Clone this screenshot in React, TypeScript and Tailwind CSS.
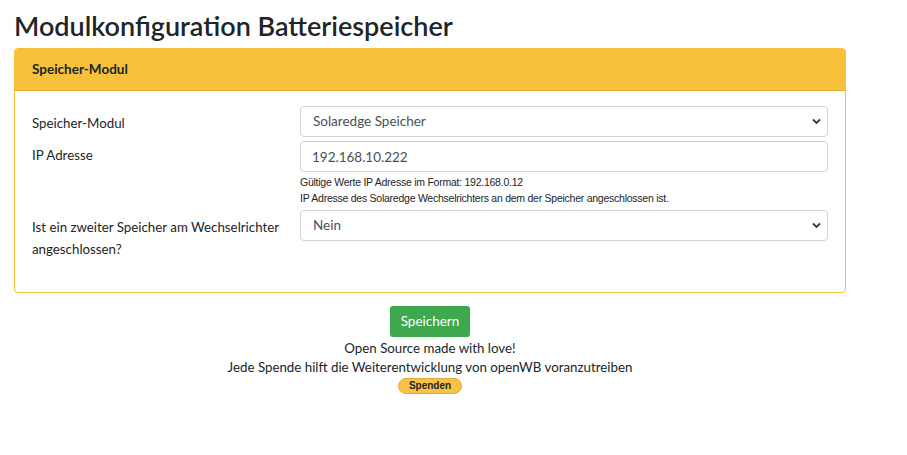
import React, { useState } from "react";

export default function App() {
  const [modul, setModul] = useState("solaredge");
  const [ip, setIp] = useState("192.168.10.222");
  const [zweiter, setZweiter] = useState("0");

  const ctrl =
    "w-full h-[31px] border border-[#ced4da] rounded-[4px] bg-white px-3 text-[13.5px] text-[#495057] outline-none";

  return (
    <div className="min-h-[455px] bg-white text-[#212529] font-['Lato',sans-serif] text-[13.3px]">
      <div className="w-[832px] ml-[14px]">
        <h1 className="pt-[9px] pb-[5px] text-[27px] leading-[34px] font-semibold">
          Modulkonfiguration Batteriespeicher
        </h1>

        {/* card */}
        <div className="border border-[#f5c13b] rounded-[4px]">
          <div className="h-[42px] bg-[#f7c13b] border-b border-[#e0ac2a] px-[17px] flex items-center font-bold text-[13.5px]">
            Speicher-Modul
          </div>
          <div className="px-[17px] pt-[15px] pb-[32px] flex flex-col gap-[4px]">
            <div className="flex">
              <label className="w-[268px] pt-[8px]">Speicher-Modul</label>
              <div className="flex-1">
                <div className="relative">
                  <select value={modul} onChange={(e) => setModul(e.target.value)} className={ctrl + " appearance-none"}>
                    <option value="none">Nicht vorhanden</option>
                    <option value="solaredge">Solaredge Speicher</option>
                  </select>
                  <Chevron />
                </div>
              </div>
            </div>

            <div className="flex">
              <label className="w-[268px] pt-[5px]">IP Adresse</label>
              <div className="flex-1">
                <input value={ip} onChange={(e) => setIp(e.target.value)} className={ctrl + " px-[11px]"} />
                <div className="mt-[2px] text-[10.5px] leading-[16px] tracking-[-0.25px] font-['Liberation_Sans_Narrow','Liberation_Sans',sans-serif]">
                  <div>Gültige Werte IP Adresse im Format: 192.168.0.12</div>
                  <div>IP Adresse des Solaredge Wechselrichters an dem der Speicher angeschlossen ist.</div>
                </div>
              </div>
            </div>

            <div className="flex">
              <label className="w-[268px] pt-[6px] leading-[22px]">
                Ist ein zweiter Speicher am Wechselrichter angeschlossen?
              </label>
              <div className="flex-1">
                <div className="relative">
                  <select value={zweiter} onChange={(e) => setZweiter(e.target.value)} className={ctrl + " appearance-none"}>
                    <option value="0">Nein</option>
                    <option value="1">Ja</option>
                  </select>
                  <Chevron />
                </div>
              </div>
            </div>
          </div>
        </div>

        <div className="flex flex-col items-center pt-[13px]">
          <button className="h-[31px] w-[80px] rounded-[3px] bg-[#3ea84e] text-white text-[13.5px]">
            Speichern
          </button>
          <div className="mt-[2px] leading-[19px]">Open Source made with love!</div>
          <div className="leading-[19px]">Jede Spende hilft die Weiterentwicklung von openWB voranzutreiben</div>
          <button className="mt-[1px] w-[64px] h-[16px] rounded-full bg-[#f7c245] border border-[#e3a93a] text-[10px] font-bold leading-[14px] font-['Liberation_Sans',sans-serif]">
            Spenden
          </button>
        </div>
      </div>
    </div>
  );
}

function Chevron() {
  return (
    <svg className="absolute right-[7px] top-[11px] pointer-events-none" width="9" height="8" viewBox="0 0 9 8">
      <path d="M1 2.5 L4.5 6 L8 2.5" fill="none" stroke="#343a40" strokeWidth="1.8" />
    </svg>
  );
}
